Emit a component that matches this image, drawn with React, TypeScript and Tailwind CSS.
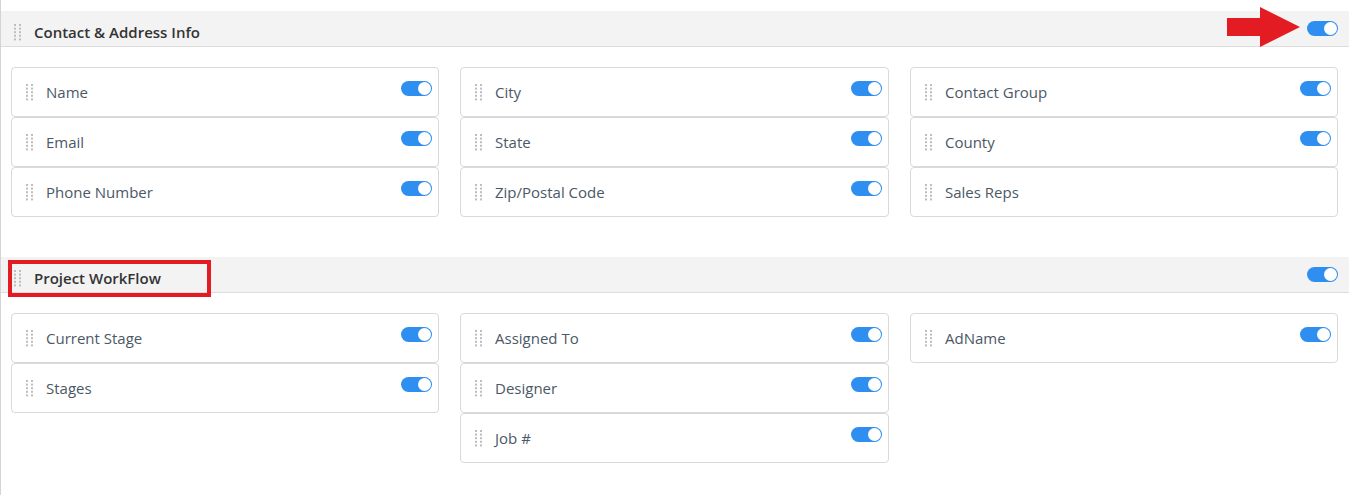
import React from "react";

type Field = { label: string; on?: boolean };

const CONTACT: Field[][] = [
  [
    { label: "Name", on: true },
    { label: "Email", on: true },
    { label: "Phone Number", on: true },
  ],
  [
    { label: "City", on: true },
    { label: "State", on: true },
    { label: "Zip/Postal Code", on: true },
  ],
  [
    { label: "Contact Group", on: true },
    { label: "County", on: true },
    { label: "Sales Reps" },
  ],
];

const WORKFLOW: Field[][] = [
  [
    { label: "Current Stage", on: true },
    { label: "Stages", on: true },
  ],
  [
    { label: "Assigned To", on: true },
    { label: "Designer", on: true },
    { label: "Job #", on: true },
  ],
  [{ label: "AdName", on: true }],
];

// 2 x 5 dot grip
function Grip() {
  return (
    <svg width="8" height="17" viewBox="0 0 8 17" className="shrink-0">
      {[0, 1, 2, 3, 4].map((r) => (
        <g key={r} fill="#bdbdbd">
          <rect x="0" y={r * 3.6} width="2" height="2" />
          <rect x="5" y={r * 3.6} width="2" height="2" />
        </g>
      ))}
    </svg>
  );
}

function Toggle() {
  return (
    <span className="relative inline-block h-[15px] w-[31px] shrink-0 rounded-full bg-[#2f8ff0]">
      <span className="absolute right-[1px] top-[1px] h-[13px] w-[13px] rounded-full bg-white" />
    </span>
  );
}

function Card({ f }: { f: Field }) {
  return (
    <div className="relative flex h-[50px] items-center rounded-[4px] border border-[#d9d9d9] bg-white pl-[14px]">
      <Grip />
      <span className="ml-[12px] text-[15px] text-[#4b5866]">{f.label}</span>
      {f.on && (
        <span className="absolute right-[6px] top-[10px]">
          <Toggle />
        </span>
      )}
    </div>
  );
}

function Section({
  title,
  cols,
  marked,
  arrow,
}: {
  title: string;
  cols: Field[][];
  marked?: boolean;
  arrow?: boolean;
}) {
  return (
    <section>
      <div className="relative flex h-[36px] items-center border-b border-[#dcdcdc] bg-[#f3f3f3] pl-[13px] pr-[11px]">
        <span className="mt-[7px] flex items-center">
          <Grip />
          <span className="ml-[12px] text-[15px] font-semibold text-[#333]">{title}</span>
        </span>
        <span className="ml-auto flex">
          <Toggle />
        </span>

        {/* callout box */}
        {marked && (
          <span className="pointer-events-none absolute left-[7px] top-[3px] h-[37px] w-[203px] border-[4px] border-[#e31b23]" />
        )}

        {/* callout arrow */}
        {arrow && (
          <svg
            className="absolute left-[1226px] top-[-4px]"
            width="74"
            height="41"
            viewBox="0 0 74 41"
          >
            <path d="M0 11 H33 V0 L73 20 L33 40 V29 H0 Z" fill="#e31b23" />
          </svg>
        )}
      </div>

      <div className="mt-[20px] grid grid-cols-[428px_429px_428px] gap-x-[21px] px-[10px]">
        {cols.map((c, i) => (
          <div key={i} className="flex flex-col">
            {c.map((f) => (
              <Card key={f.label} f={f} />
            ))}
          </div>
        ))}
      </div>
    </section>
  );
}

export default function App() {
  return (
    <div
      className="h-[495px] w-[1349px] border-l border-[#d4d4d4] bg-white pt-[11px]"
      style={{ fontFamily: '"Open Sans", "Noto Sans", sans-serif' }}
    >
      <Section title="Contact & Address Info" cols={CONTACT} arrow />
      <div className="h-[40px]" />
      <Section title="Project WorkFlow" cols={WORKFLOW} marked />
    </div>
  );
}
